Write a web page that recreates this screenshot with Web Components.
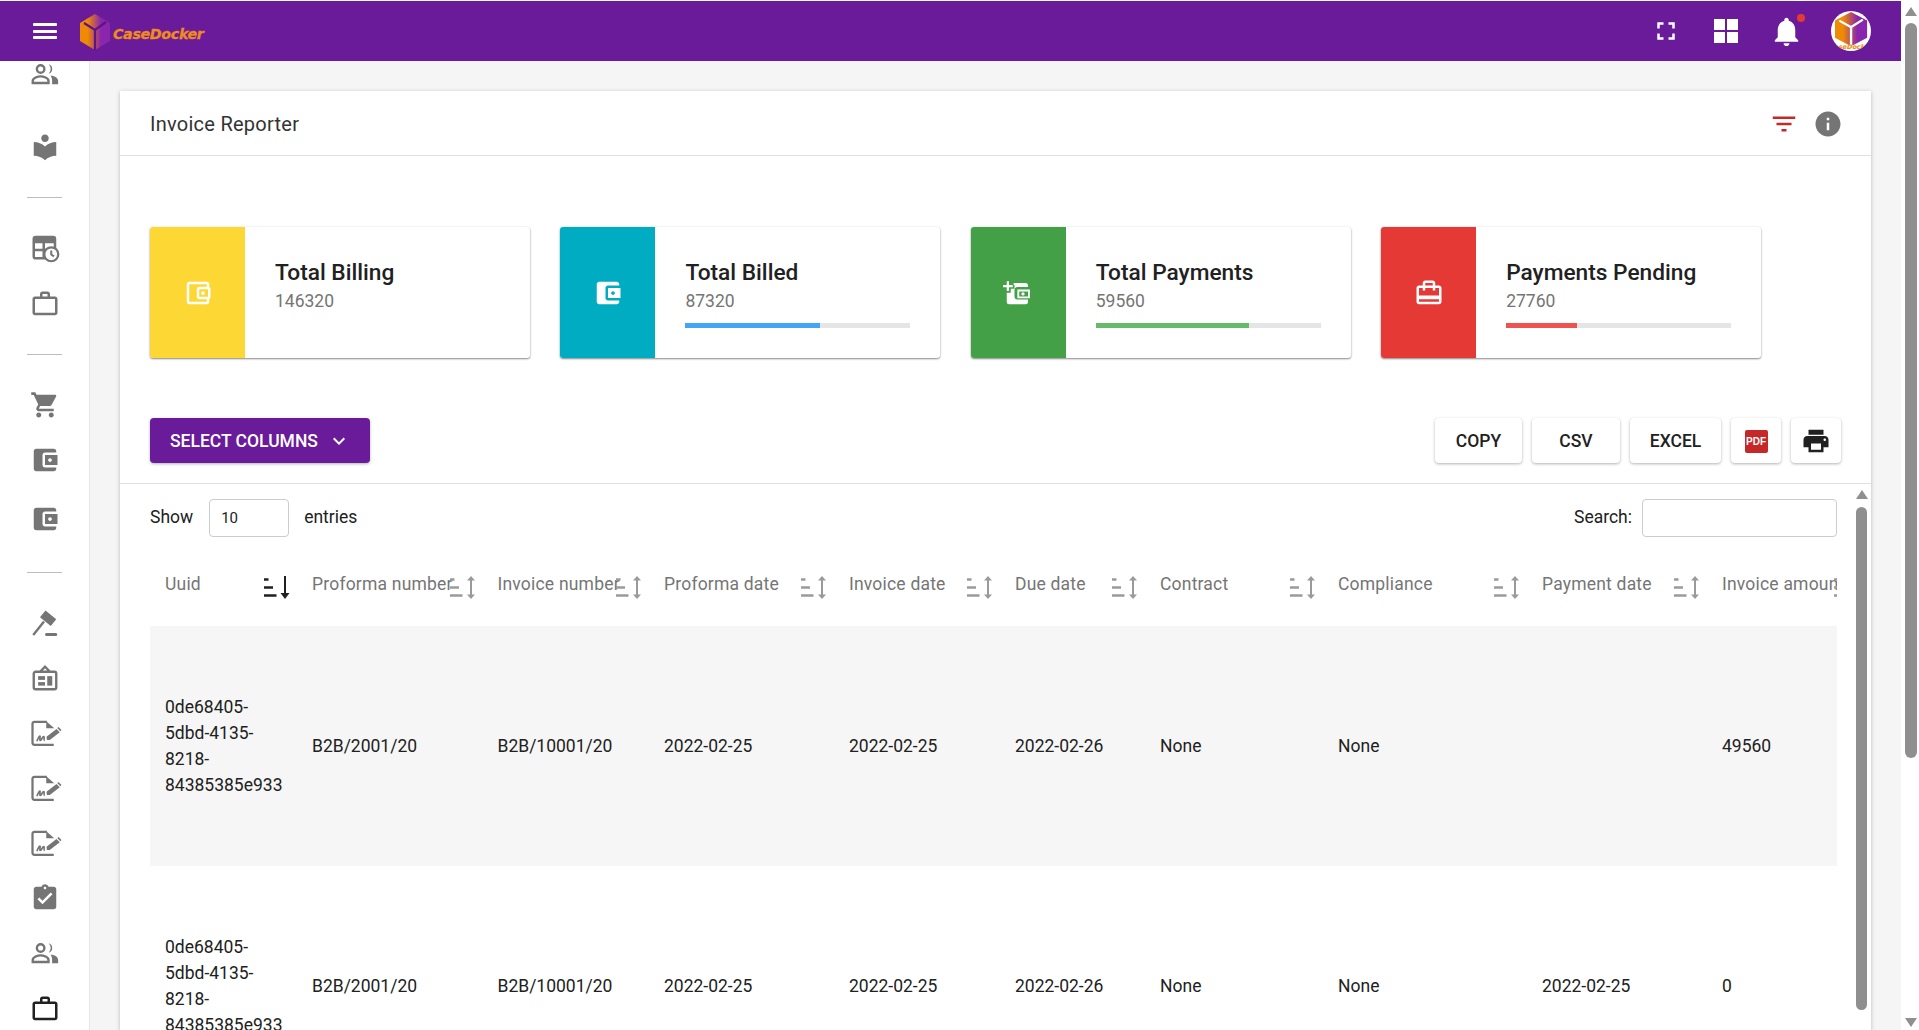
<!DOCTYPE html>
<html lang="en">
<head>
<meta charset="utf-8">
<title>Invoice Reporter</title>
<style>
  html, body { margin: 0; height: 100%; overflow: hidden; background: #fff; }
  body { font-family: Roboto, "Liberation Sans", sans-serif; font-size: 17.5px; color: #212121; }
</style>
</head>
<body>
<app-shell>
  <app-header slot="header"></app-header>
  <side-nav slot="nav"></side-nav>
  <report-card title-text="Invoice Reporter">
    <stat-card color="#fdd835">
      <ui-icon slot="icon" name="walletOutline"></ui-icon>
      <span slot="title">Total Billing</span>
      <span slot="value">146320</span>
    </stat-card>
    <stat-card color="#00acc1" bar="#42a5f5" progress="60">
      <ui-icon slot="icon" name="wallet"></ui-icon>
      <span slot="title">Total Billed</span>
      <span slot="value">87320</span>
    </stat-card>
    <stat-card color="#43a047" bar="#66bb6a" progress="68">
      <ui-icon slot="icon" name="walletAdd"></ui-icon>
      <span slot="title">Total Payments</span>
      <span slot="value">59560</span>
    </stat-card>
    <stat-card color="#e53935" bar="#ef5350" progress="31.5">
      <ui-icon slot="icon" name="cardTravel"></ui-icon>
      <span slot="title">Payments Pending</span>
      <span slot="value">27760</span>
    </stat-card>
  </report-card>
</app-shell>

<script>
const ICONS = {
  people: '<circle cx="8.5" cy="8" r="3" fill="none" stroke="currentColor" stroke-width="1.9"/><path d="M15 4.2a4 4 0 0 1 0 7.6 6 6 0 0 0 0-7.6z"/><path d="M2.2 19.2v-1.7c0-2.3 4.2-3.6 6.3-3.6s6.3 1.3 6.3 3.6v1.7z" fill="none" stroke="currentColor" stroke-width="1.9"/><path d="M16.5 13.2c2.8.4 6 1.6 6 4.3v2.7h-4.8v-2.7c0-1.7-.5-3.1-1.2-4.3z"/>',
  library: '<path d="M12 11.55C9.64 9.35 6.48 8 3 8v11c3.48 0 6.64 1.35 9 3.55 2.36-2.19 5.52-3.55 9-3.55V8c-3.48 0-6.64 1.35-9 3.55zM12 8c1.66 0 3-1.34 3-3s-1.34-3-3-3-3 1.34-3 3 1.34 3 3 3z"/>',
  tableClock: '<rect x="3" y="2.4" width="17" height="17" rx="1.5" fill="none" stroke="currentColor" stroke-width="2"/><rect x="3" y="2.4" width="17" height="5"/><path d="M3 12.7h10M11 3.2v16" stroke="currentColor" stroke-width="2"/><circle cx="17" cy="16.2" r="5.6" fill="#fff" stroke="currentColor" stroke-width="1.8"/><path d="M17 13.2v3.2l2.2 1.5" fill="none" stroke="currentColor" stroke-width="1.6"/>',
  work: '<path d="M14 6V4h-4v2h4zM4 8v11h16V8H4zm16-2c1.11 0 2 .89 2 2v11c0 1.11-.89 2-2 2H4c-1.11 0-2-.89-2-2l.01-11c0-1.11.88-2 1.99-2h4V4c0-1.11.89-2 2-2h4c1.11 0 2 .89 2 2v2h4z"/>',
  cart: '<path d="M7 18c-1.1 0-1.99.9-1.99 2S5.9 22 7 22s2-.9 2-2-.9-2-2-2zM1 2v2h2l3.6 7.59-1.35 2.45c-.16.28-.25.61-.25.96 0 1.1.9 2 2 2h12v-2H7.42c-.14 0-.25-.11-.25-.25l.03-.12.9-1.83h7.45c.75 0 1.41-.41 1.75-1.03l3.58-6.49c.08-.14.12-.31.12-.48 0-.55-.45-1-1-1H5.21l-.94-2H1zm16 16c-1.1 0-1.99.9-1.99 2s.89 2 1.99 2 2-.9 2-2-.9-2-2-2z"/>',
  wallet: '<path d="M21 18v1c0 1.1-.9 2-2 2H5c-1.11 0-2-.9-2-2V5c0-1.1.89-2 2-2h14c1.1 0 2 .9 2 2v1h-9c-1.11 0-2 .9-2 2v8c0 1.1.89 2 2 2h9zm-9-2h10V8H12v8zm4-2.5c-.83 0-1.5-.67-1.5-1.5s.67-1.5 1.5-1.5 1.5.67 1.5 1.5-.67 1.5-1.5 1.5z"/>',
  walletOutline: '<path d="M21 7.28V5c0-1.1-.9-2-2-2H5c-1.11 0-2 .9-2 2v14c0 1.1.89 2 2 2h14c1.1 0 2-.9 2-2v-2.28c.59-.35 1-.98 1-1.72V9c0-.74-.41-1.38-1-1.72zM20 9v6h-7V9h7zM5 19V5h14v2h-6c-1.1 0-2 .9-2 2v6c0 1.1.9 2 2 2h6v2H5z"/><circle cx="16" cy="12" r="1.5"/>',
  walletAdd: '<path d="M0 5.6h3V2.6h1.8v3h3v1.8h-3v3H3v-3H0z"/><path d="M8.5 4H18a2 2 0 0 1 2 2v1.2h-8.2a2.6 2.6 0 0 0-2.6 2.6v4.8a2.6 2.6 0 0 0 2.6 2.6H20V19a2 2 0 0 1-2 2H5a2 2 0 0 1-2-2v-7.2h3.2V8.6h3V5.6H8.5z"/><path d="M11.5 9.2H21.5v7H11.5zM13 10.7v4h7v-4z" fill-rule="evenodd"/><circle cx="16" cy="12.7" r="1.3"/>',
  cardTravel: '<path d="M20 6h-3V4c0-1.11-.89-2-2-2H9c-1.11 0-2 .89-2 2v2H4c-1.11 0-2 .89-2 2v11c0 1.11.89 2 2 2h16c1.11 0 2-.89 2-2V8c0-1.11-.89-2-2-2zM9 4h6v2H9V4zm11 15H4v-2h16v2zm0-5H4V8h3v2h2V8h6v2h2V8h3v6z"/>',
  gavel: '<path d="M12.4 1.2l8.6 7-4.4 5.4-8.6-7z"/><path d="M11.2 10L2.6 20.8" fill="none" stroke="currentColor" stroke-width="1.9"/><rect x="12" y="19.2" width="9.8" height="2.4" rx="1.2"/>',
  badge: '<path d="M4.5 7h15A1.5 1.5 0 0 1 21 8.5v11a1.5 1.5 0 0 1-1.5 1.5h-15A1.5 1.5 0 0 1 3 19.5v-11A1.5 1.5 0 0 1 4.5 7zM8 7l4-4 4 4" fill="none" stroke="currentColor" stroke-width="1.9"/><rect x="6.5" y="10.5" width="5.5" height="3"/><rect x="6.5" y="15.3" width="5.5" height="2.8"/><rect x="13.8" y="10.5" width="4" height="7.6"/>',
  signature: '<path d="M13.5 3H3.6A1.6 1.6 0 0 0 2 4.6v15.2A1.6 1.6 0 0 0 3.6 21.4H19" fill="none" stroke="currentColor" stroke-width="1.8"/><path d="M13 2.6l6.4 5.6h-6.4z"/><path d="M5.5 18.5c1-2.2 1.7-4 2.4-4s-.6 3.4.4 3.4 1.6-3 2.6-3-.2 3 .9 3" fill="none" stroke="currentColor" stroke-width="1.3"/><path d="M13.5 17.5l-.3-2.6 8-6.2 2.6 2.6-8 6.2zM21.8 8l1-.8 2.4 2.4-1 1z"/>',
  task: '<path d="M19 3h-4.18C14.4 1.84 13.3 1 12 1c-1.3 0-2.4.84-2.82 2H5c-1.1 0-2 .9-2 2v14c0 1.1.9 2 2 2h14c1.1 0 2-.9 2-2V5c0-1.1-.9-2-2-2zm-7 0c.55 0 1 .45 1 1s-.45 1-1 1-1-.45-1-1 .45-1 1-1zm-2 14l-4-4 1.41-1.41L10 14.17l6.59-6.59L18 9l-8 8z"/>',
  fullscreen: '<path d="M7 14H5v5h5v-2H7v-3zm-2-4h2V7h3V5H5v5zm12 7h-3v2h5v-5h-2v3zM14 5v2h3v3h2V5h-5z"/>',
  bell: '<path d="M12 22c1.1 0 2-.9 2-2h-4c0 1.1.89 2 2 2zm6-6v-5c0-3.07-1.64-5.64-4.5-6.32V4c0-.83-.67-1.5-1.5-1.5s-1.5.67-1.5 1.5v.68C7.63 5.36 6 7.92 6 11v5l-2 2v1h16v-1l-2-2z"/>',
  filter: '<path d="M10 18h4v-2h-4v2zM3 6v2h18V6H3zm3 7h12v-2H6v2z"/>',
  info: '<path d="M12 2C6.48 2 2 6.48 2 12s4.48 10 10 10 10-4.48 10-10S17.52 2 12 2zm1 15h-2v-6h2v6zm0-8h-2V7h2v2z"/>',
  chevron: '<path d="M7.41 8.59L12 13.17l4.59-4.58L18 10l-6 6-6-6 1.41-1.41z"/>',
  print: '<path d="M19 8H5c-1.66 0-3 1.34-3 3v6h4v4h12v-4h4v-6c0-1.66-1.34-3-3-3zm-3 11H8v-5h8v5zm3-7c-.55 0-1-.45-1-1s.45-1 1-1 1 .45 1 1-.45 1-1 1zm-1-9H6v4h12V3z"/>'
};

class UiIcon extends HTMLElement {
  connectedCallback() {
    const size = this.getAttribute('size') || 30;
    this.attachShadow({ mode: 'open' }).innerHTML = `
      <style>
        :host { display: inline-flex; width: ${size}px; height: ${size}px; flex: none; }
        svg { width: 100%; height: 100%; fill: currentColor; overflow: visible; }
      </style>
      <svg viewBox="0 0 24 24">${ICONS[this.getAttribute('name')]}</svg>`;
  }
}

const CUBE = (id, line) => `
  <defs><linearGradient id="${id}" x1="0" x2="1" y1="0" y2="0">
    <stop offset="0.25" stop-color="#ef8a05"/><stop offset="0.7" stop-color="#8a25ad"/>
  </linearGradient></defs>
  <polygon points="15,0 30,9 30,27 15,36 0,27 0,9" fill="url(#${id})"/>
  <path d="M4 9l11 7 11-8M15 16v20" fill="none" stroke="${line}" stroke-width="2.2"/>`;

class AppHeader extends HTMLElement {
  constructor() {
    super();
    this.attachShadow({ mode: 'open' }).innerHTML = `
      <style>
        :host { display: flex; align-items: center; height: 60px; margin-top: 1px; padding: 0 30px 0 33px; background: #6a1b9a; color: #fff; }
        .burger { display: flex; flex-direction: column; gap: 3.5px; width: 24px; }
        .burger i { display: block; height: 3px; background: #fff; border-radius: 1px; }
        .logo { width: 30px; height: 36px; margin: 2px 3px 0 23px; }
        .brand { font: italic bold 14.2px "DejaVu Sans", sans-serif; color: #f08c1a; letter-spacing: -0.3px; margin-top: 5px; -webkit-text-stroke: .3px #f08c1a; }
        .tools { margin-left: auto; display: flex; align-items: center; }
        .apps { display: grid; grid-template-columns: 11px 11px; grid-auto-rows: 11px; gap: 2px; margin: 0 31px 0 33px; }
        .apps i { background: #fff; }
        .bell { position: relative; display: flex; }
        .dot { position: absolute; top: 0; right: -1px; width: 8px; height: 8px; border-radius: 50%; background: #e53935; }
        .avatar { width: 40px; height: 40px; border-radius: 50%; background: #fff; margin-left: 27px; overflow: hidden; }
        .avatar svg { display: block; width: 40px; height: 40px; }
        .avatar text { font: italic bold 6.5px "DejaVu Sans", sans-serif; fill: #ef8a05; }
      </style>
      <div class="burger"><i></i><i></i><i></i></div>
      <svg class="logo" viewBox="0 0 30 36">${CUBE('logoCube', '#5d1485')}</svg>
      <span class="brand">CaseDocker</span>
      <div class="tools">
        <ui-icon name="fullscreen"></ui-icon>
        <div class="apps"><i></i><i></i><i></i><i></i></div>
        <div class="bell"><ui-icon name="bell" size="35"></ui-icon><span class="dot"></span></div>
        <div class="avatar">
          <svg viewBox="0 0 40 40"><g transform="translate(4 1) scale(1.07 0.95)">${CUBE('avatarCube', '#fff')}</g><text x="20" y="38" text-anchor="middle">CaseDocker</text></svg>
        </div>
      </div>`;
  }
}

class SideNav extends HTMLElement {
  constructor() {
    super();
    // icon name + distance in px from the previous item
    const items = [
      ['people', -2], ['library', 43], ['-', 35], ['tableClock', 36], ['work', 25], ['-', 35],
      ['cart', 35], ['wallet', 25], ['wallet', 29], ['-', 38], ['gavel', 36],
      ['badge', 24], ['signature', 25], ['signature', 25], ['signature', 25], ['task', 25],
      ['people', 25], ['work', 26]
    ];
    const html = items.map(([name, gap], i) => name === '-'
      ? `<hr style="margin-top:${gap}px">`
      : `<ui-icon name="${name}" style="margin-top:${gap}px${i === items.length - 1 ? ';color:#212121' : ''}"></ui-icon>`).join('');
    this.attachShadow({ mode: 'open' }).innerHTML = `
      <style>
        :host { display: flex; flex-direction: column; align-items: center; width: 90px; box-sizing: border-box; background: #fff; border-right: 1px solid #e6e6e6; color: #757575; overflow: hidden; flex: none; }
        hr { width: 35px; height: 1px; border: 0; margin-bottom: 0; background: #bdbdbd; flex: none; }
      </style>${html}`;
  }
}

class StatCard extends HTMLElement {
  constructor() {
    super();
    const color = this.getAttribute('color');
    const progress = this.getAttribute('progress');
    this.attachShadow({ mode: 'open' }).innerHTML = `
      <style>
        :host { display: flex; width: 380px; height: 131px; border-radius: 3px; background: #fff; box-shadow: 0 1px 2px rgba(0,0,0,.45), 0 0 3px rgba(0,0,0,.06); overflow: hidden; flex: none; }
        .tile { width: 95px; flex: none; background: ${color}; color: #fff; display: flex; align-items: center; justify-content: center; }
        .body { flex: 1; padding: 31px 30px 0 30px; }
        .title { font-size: 22.7px; font-weight: 500; color: #212121; line-height: 30px; }
        .value { font-size: 17.5px; color: #757575; line-height: 26px; }
        .track { height: 5px; background: #e5e5e5; margin-top: 9px; }
        .fill { height: 100%; background: ${this.getAttribute('bar') || 'transparent'}; width: ${progress || 0}%; }
      </style>
      <div class="tile"><slot name="icon"></slot></div>
      <div class="body">
        <div class="title"><slot name="title"></slot></div>
        <div class="value"><slot name="value"></slot></div>
        ${progress ? '<div class="track"><div class="fill"></div></div>' : ''}
      </div>`;
  }
}

class ScrollBar extends HTMLElement {
  constructor() {
    super();
    const top = this.getAttribute('top');
    const gap = this.getAttribute('gap');
    const thumb = this.getAttribute('thumb');
    const w = this.getAttribute('thumb-width');
    const left = this.getAttribute('left');
    const down = this.hasAttribute('down');
    this.attachShadow({ mode: 'open' }).innerHTML = `
      <style>
        :host { display: flex; flex-direction: column; flex: none; box-sizing: border-box; padding: ${top}px 0 3px ${left}px; }
        .up, .down { width: 12px; height: 9px; background: #8f8f8f; flex: none; }
        .up { clip-path: polygon(50% 0, 100% 100%, 0 100%); }
        .down { clip-path: polygon(0 0, 100% 0, 50% 100%); margin-top: auto; }
        .thumb { width: ${w}px; height: ${thumb}px; margin-top: ${gap}px; background: #8f8f8f; border-radius: 6px; flex: none; }
      </style>
      <div class="up"></div><div class="thumb"></div>${down ? '<div class="down"></div>' : ''}`;
  }
}

class ActionButton extends HTMLElement {
  constructor() {
    super();
    this.attachShadow({ mode: 'open' }).innerHTML = `
      <style>
        :host { display: inline-flex; align-items: center; justify-content: center; box-sizing: border-box; height: 45px; padding-top: 1px; border-radius: 4px; background: #fff; box-shadow: 0 1px 3px rgba(0,0,0,.3); font-weight: 500; font-size: 17.5px; color: #212121; flex: none; }
      </style><slot></slot>`;
  }
}

class SortHead extends HTMLElement {
  constructor() {
    super();
    const active = this.hasAttribute('active');
    const arrow = active
      ? '<path d="M21 0v18"/><path d="M16.5 17l4.5 6 4.5-6z" fill="currentColor" stroke="none"/>'
      : '<path d="M21 3v17"/><path d="M17 4.5L21 0l4 4.5z" fill="currentColor" stroke="none"/><path d="M17 18.5l4 4.5 4-4.5z" fill="currentColor" stroke="none"/>';
    this.attachShadow({ mode: 'open' }).innerHTML = `
      <style>
        :host { display: block; color: #757575; font-weight: 400; letter-spacing: .2px; }
        svg { position: absolute; right: 7px; top: 30px; width: 26px; height: 23px; color: ${active ? '#212121' : '#9a9a9a'}; fill: none; stroke: currentColor; stroke-width: 2; }
      </style>
      <slot></slot>
      <svg viewBox="0 0 26 23"><path d="M0 3.5h4.5M0 11.5h9M0 19.5h12.5" stroke-width="2.4"/>${arrow}</svg>`;
  }
}

class DataTable extends HTMLElement {
  constructor() {
    super();
    const cols = [
      ['Uuid', 147], ['Proforma number', 185.5], ['Invoice number', 166.5], ['Proforma date', 185],
      ['Invoice date', 166], ['Due date', 145], ['Contract', 178], ['Compliance', 204],
      ['Payment date', 180], ['Invoice amount', 160]
    ];
    const uuid = '0de68405-<wbr>5dbd-4135-<wbr>8218-<wbr>84385385e933';
    const rows = [
      [uuid, 'B2B/2001/20', 'B2B/10001/20', '2022-02-25', '2022-02-25', '2022-02-26', 'None', 'None', '', '49560'],
      [uuid, 'B2B/2001/20', 'B2B/10001/20', '2022-02-25', '2022-02-25', '2022-02-26', 'None', 'None', '2022-02-25', '0']
    ];
    this.attachShadow({ mode: 'open' }).innerHTML = `
      <style>
        :host { display: block; width: 1687px; overflow: hidden; }
        table { table-layout: fixed; width: 1717px; border-collapse: collapse; }
        th { position: relative; height: 80px; padding: 0 15px 5px; text-align: left; font-weight: 400; white-space: nowrap; box-sizing: border-box; }
        td { height: 240px; padding: 0 15px; line-height: 26px; color: #212121; vertical-align: middle; }
        tbody tr:nth-child(odd) { background: #f6f6f6; }
      </style>
      <table>
        <colgroup>${cols.map(c => `<col style="width:${c[1]}px">`).join('')}</colgroup>
        <thead><tr>${cols.map((c, i) => `<th><sort-head ${i === 0 ? 'active' : ''}>${c[0]}</sort-head></th>`).join('')}</tr></thead>
        <tbody>${rows.map(r => `<tr>${r.map(v => `<td>${v}</td>`).join('')}</tr>`).join('')}</tbody>
      </table>`;
  }
}

class ReportCard extends HTMLElement {
  constructor() {
    super();
    this.attachShadow({ mode: 'open' }).innerHTML = `
      <style>
        :host { display: flex; flex-direction: column; flex: 1; min-height: 0; background: #fff; box-shadow: 0 1px 4px rgba(0,0,0,.25); }
        .head { display: flex; align-items: center; height: 65px; box-sizing: border-box; padding: 1px 28px 0 30px; border-bottom: 1px solid #e0e0e0; flex: none; }
        .head h2 { margin: 0; font-size: 20px; font-weight: 400; color: #333; letter-spacing: .26px; }
        .filter { margin-left: auto; color: #c62828; }
        .info { color: #757575; margin-left: 14px; }
        .stats { display: flex; gap: 30.4px; padding: 71px 30px 0; flex: none; }
        .actions { display: flex; align-items: center; padding: 60px 30px 20px; border-bottom: 1px solid #e0e0e0; flex: none; }
        .select { display: flex; align-items: center; width: 220px; height: 45px; box-sizing: border-box; padding: 0 0 0 20px; background: #6a1b9a; color: #fff; border-radius: 4px; box-shadow: 0 1px 3px rgba(0,0,0,.3); font-weight: 500; white-space: nowrap; }
        .select ui-icon { margin-left: 9px; }
        .exports { margin-left: auto; display: flex; gap: 10px; }
        .pdf { width: 23px; height: 23px; border-radius: 2px; background: #c62828; color: #fff; font: bold 10px "Liberation Sans", sans-serif; display: flex; align-items: center; justify-content: center; }
        .lower { display: flex; flex: 1; min-height: 0; overflow: hidden; }
        .table-area { padding: 15px 0 0 30px; flex: none; }
        .controls { display: flex; align-items: center; justify-content: space-between; height: 38px; margin-bottom: 9px; }
        .controls label { display: flex; align-items: center; padding-bottom: 2px; }
        .input { display: flex; align-items: center; box-sizing: border-box; height: 38px; margin-bottom: -2px; border: 1px solid #ccc; border-radius: 4px; font-size: 15px; padding-left: 11px; }
        .len { width: 80px; margin-left: 16px; margin-right: 15px; }
        .find { width: 195px; margin-left: 10px; }
      </style>
      <div class="head">
        <h2>${this.getAttribute('title-text')}</h2>
        <ui-icon class="filter" name="filter"></ui-icon>
        <ui-icon class="info" name="info"></ui-icon>
      </div>
      <div class="stats"><slot></slot></div>
      <div class="actions">
        <div class="select">SELECT COLUMNS<ui-icon name="chevron" size="24"></ui-icon></div>
        <div class="exports">
          <action-button style="width:87px">COPY</action-button>
          <action-button style="width:88px">CSV</action-button>
          <action-button style="width:91px">EXCEL</action-button>
          <action-button style="width:50px"><span class="pdf">PDF</span></action-button>
          <action-button style="width:50px"><ui-icon name="print"></ui-icon></action-button>
        </div>
      </div>
      <div class="lower">
        <div class="table-area">
          <div class="controls">
            <label>Show<span class="input len">10</span>entries</label>
            <label>Search:<span class="input find"></span></label>
          </div>
          <data-table></data-table>
        </div>
        <scroll-bar top="6" gap="8" thumb="503" thumb-width="11" left="19"></scroll-bar>
      </div>`;
  }
}

class AppShell extends HTMLElement {
  constructor() {
    super();
    this.attachShadow({ mode: 'open' }).innerHTML = `
      <style>
        :host { display: flex; height: 100vh; }
        .main { display: flex; flex-direction: column; flex: 1; min-width: 0; }
        .below { display: flex; flex: 1; min-height: 0; background: #f5f5f5; }
        .content { display: flex; flex: 1; min-width: 0; padding: 30px 30px 0; }
        scroll-bar { width: 18px; background: #fff; }
      </style>
      <div class="main">
        <slot name="header"></slot>
        <div class="below">
          <slot name="nav"></slot>
          <div class="content"><slot></slot></div>
        </div>
      </div>
      <scroll-bar top="7" gap="7" thumb="735" thumb-width="12" left="4" down></scroll-bar>`;
  }
}

customElements.define('ui-icon', UiIcon);
customElements.define('app-header', AppHeader);
customElements.define('side-nav', SideNav);
customElements.define('stat-card', StatCard);
customElements.define('scroll-bar', ScrollBar);
customElements.define('action-button', ActionButton);
customElements.define('sort-head', SortHead);
customElements.define('data-table', DataTable);
customElements.define('report-card', ReportCard);
customElements.define('app-shell', AppShell);
</script>
</body>
</html>
